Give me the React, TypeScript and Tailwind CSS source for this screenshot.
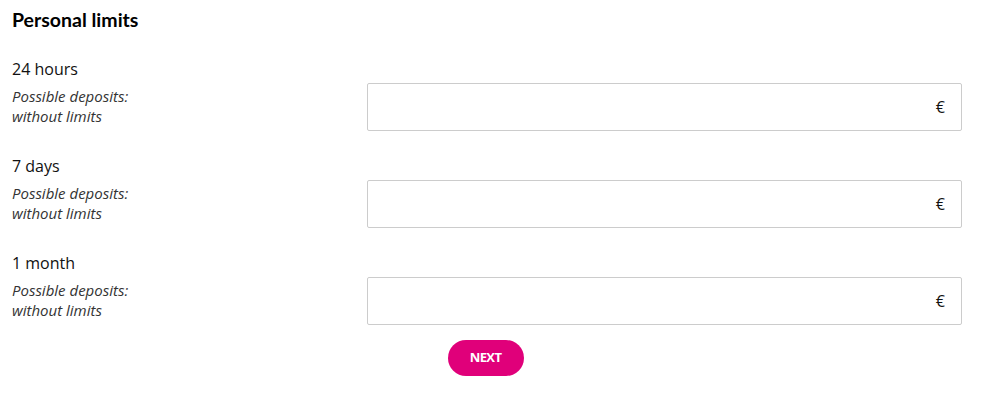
import { useState } from 'react';

interface Limit {
  id: string;
  label: string;
}

const limits: Limit[] = [
  { id: 'day', label: '24 hours' },
  { id: 'week', label: '7 days' },
  { id: 'month', label: '1 month' },
];

export default function App() {
  const [values, setValues] = useState<Record<string, string>>({});

  return (
    <div className="w-[984px] h-[403px] bg-white pl-3 pt-2 font-['Open_Sans',sans-serif] text-[#111]">
      <div className="w-[950px]">
        <h2 className="font-['Lato',sans-serif] font-bold text-[19.5px] leading-6 text-black">Personal limits</h2>

        <div className="mt-[25px] flex flex-col gap-[23px]">
          {limits.map((limit) => (
            <div key={limit.id} className="flex">
              <div className="w-[355px] shrink-0">
                <div className="text-[16px] leading-6">{limit.label}</div>
                <div className="mt-[5px] text-[15px] leading-5 italic text-[#333]">
                  Possible deposits:
                  <br />
                  without limits
                </div>
              </div>
              <div className="flex-1 pt-[26px]">
                <label className="flex items-center h-12 border border-[#cccccc] rounded-[2px] bg-white px-3">
                  <input
                    type="text"
                    value={values[limit.id] ?? ''}
                    onChange={(e) => setValues({ ...values, [limit.id]: e.target.value })}
                    className="flex-1 h-full outline-none bg-transparent text-[16px]"
                  />
                  <span className="text-[16px] mr-[4px]">€</span>
                </label>
              </div>
            </div>
          ))}
        </div>

        <div className="mt-[15px] flex justify-center">
          <button className="h-9 w-[76px] rounded-full bg-[#e0007a] text-white text-[13px] font-bold tracking-[-0.6px] ml-[-3px]">
            NEXT
          </button>
        </div>
      </div>
    </div>
  );
}
